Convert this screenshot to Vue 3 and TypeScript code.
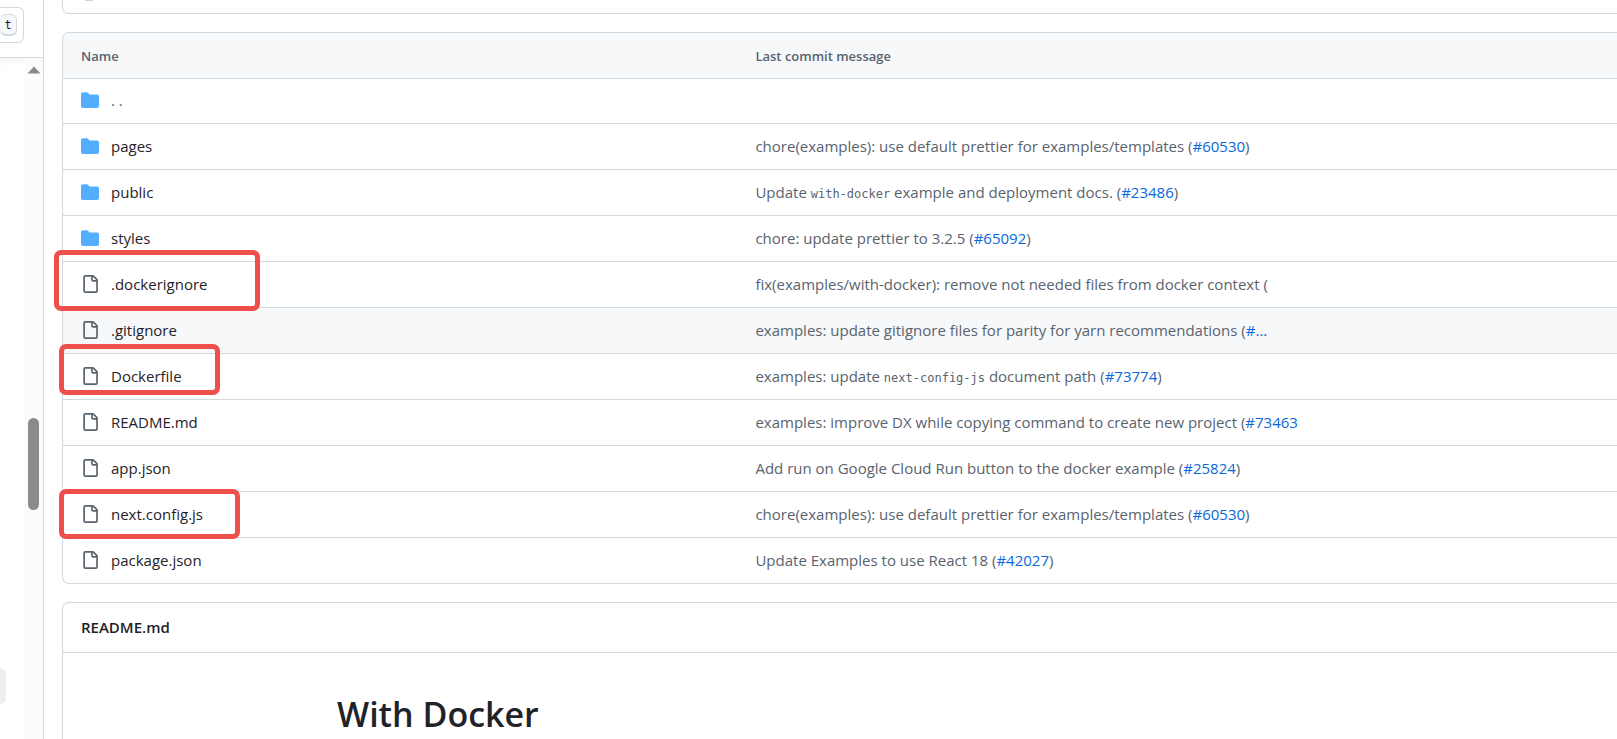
<script setup lang="ts">
interface Entry {
  name: string
  kind: 'folder' | 'file'
  before?: string
  code?: string
  after?: string
  link?: string
  tail?: string
  active?: boolean
  mark?: 'wide' | 'short' | 'medium'
}

const entries: Entry[] = [
  { name: 'pages', kind: 'folder', before: 'chore(examples): use default prettier for examples/templates (', link: '#60530', tail: ')' },
  { name: 'public', kind: 'folder', before: 'Update ', code: 'with-docker', after: ' example and deployment docs. (', link: '#23486', tail: ')' },
  { name: 'styles', kind: 'folder', before: 'chore: update prettier to 3.2.5 (', link: '#65092', tail: ')' },
  { name: '.dockerignore', kind: 'file', before: 'fix(examples/with-docker): remove not needed files from docker context (', mark: 'wide' },
  { name: '.gitignore', kind: 'file', before: 'examples: update gitignore files for parity for yarn recommendations (', link: '#...', active: true },
  { name: 'Dockerfile', kind: 'file', before: 'examples: update ', code: 'next-config-js', after: ' document path (', link: '#73774', tail: ')', mark: 'short' },
  { name: 'README.md', kind: 'file', before: 'examples: improve DX while copying command to create new project (', link: '#73463' },
  { name: 'app.json', kind: 'file', before: 'Add run on Google Cloud Run button to the docker example (', link: '#25824', tail: ')' },
  { name: 'next.config.js', kind: 'file', before: 'chore(examples): use default prettier for examples/templates (', link: '#60530', tail: ')', mark: 'medium' },
  { name: 'package.json', kind: 'file', before: 'Update Examples to use React 18 (', link: '#42027', tail: ')' },
]

const folderPath =
  'M1.75 1A1.75 1.75 0 0 0 0 2.75v10.5C0 14.216.784 15 1.75 15h12.5A1.75 1.75 0 0 0 16 13.25v-8.5A1.75 1.75 0 0 0 14.25 3H7.5a.25.25 0 0 1-.2-.1l-.9-1.2C6.07 1.26 5.55 1 5 1H1.75Z'
const filePath =
  'M2 1.75C2 .784 2.784 0 3.75 0h6.586c.464 0 .909.184 1.237.513l2.914 2.914c.329.328.513.773.513 1.237v9.586A1.75 1.75 0 0 1 13.25 16h-9.5A1.75 1.75 0 0 1 2 14.25Zm1.75-.25a.25.25 0 0 0-.25.25v12.5c0 .138.112.25.25.25h9.5a.25.25 0 0 0 .25-.25V6h-2.75A1.75 1.75 0 0 1 9 4.25V1.5Zm6.75.062V4.25c0 .138.112.25.25.25h2.688l-.011-.013-2.914-2.914-.013-.011Z'
</script>

<template>
  <div class="page">
    <aside class="sidebar">
      <div class="search">
        <div class="search-box"><kbd>t</kbd></div>
      </div>
      <div class="tree">
        <div class="tree-items"><div class="tree-item"></div></div>
        <div class="track">
          <svg class="arrow" viewBox="0 0 14 8" aria-hidden="true"><path d="M7 0.5 13.5 7.5H0.5Z" /></svg>
          <div class="thumb"></div>
        </div>
      </div>
    </aside>

    <main class="main">
      <section class="box commit"><span class="avatar"></span></section>

      <section class="box">
        <table>
          <thead>
            <tr>
              <th class="col-name" scope="col">Name</th>
              <th scope="col">Last commit message</th>
            </tr>
          </thead>
          <tbody>
            <tr class="parent">
              <td>
                <div class="entry">
                  <svg class="icon folder" viewBox="0 0 16 16" aria-hidden="true"><path :d="folderPath" /></svg>
                  <a class="up" href="#">. .</a>
                </div>
              </td>
              <td></td>
            </tr>
            <tr v-for="e in entries" :key="e.name" :class="{ active: e.active }">
              <td>
                <div class="entry">
                  <svg class="icon" :class="e.kind" viewBox="0 0 16 16" aria-hidden="true">
                    <path :d="e.kind === 'folder' ? folderPath : filePath" />
                  </svg>
                  <a class="name" href="#">{{ e.name }}</a>
                  <span v-if="e.mark" class="mark" :class="e.mark"></span>
                </div>
              </td>
              <td class="message">{{ e.before }}<code v-if="e.code">{{ e.code }}</code>{{ e.after }}<a v-if="e.link" href="#">{{ e.link }}</a>{{ e.tail }}</td>
            </tr>
          </tbody>
        </table>
      </section>

      <section class="box readme">
        <h2>README.md</h2>
        <article><h1>With Docker</h1></article>
      </section>
    </main>
  </div>
</template>

<style>
body {
  margin: 0;
  background: #fff;
}
</style>

<style scoped>
* {
  box-sizing: border-box;
}
.page {
  display: flex;
  height: 100vh;
  overflow: hidden;
  font-family: 'Segoe UI', 'Open Sans', 'Noto Sans', sans-serif;
  font-size: 15px;
  line-height: 24px;
  color: #1f2328;
}
a {
  color: inherit;
  text-decoration: none;
}
.sidebar {
  flex: none;
  width: 44px;
  display: flex;
  flex-direction: column;
  border-right: 1px solid #d1d9e0;
}
.search {
  height: 58px;
  padding: 7px 19px 0 0;
  border-bottom: 1px solid #d1d9e0;
}
.search-box {
  height: 36px;
  display: flex;
  align-items: center;
  border: 1px solid #d1d9e0;
  border-left: 0;
  border-radius: 0 6px 6px 0;
}
kbd {
  width: 17px;
  height: 22px;
  text-align: center;
  font: 12px/20px 'DejaVu Sans Mono', monospace;
  background: #f6f8fa;
  border: 1px solid #d1d9e0;
  border-left: 0;
  border-bottom-width: 2px;
  border-radius: 6px;
}
.tree {
  flex: 1;
  display: flex;
  box-shadow: inset 0 6px 8px -4px #f0f1f3;
}
.tree-items {
  flex: 1;
  padding-top: 610px;
}
.tree-item {
  width: 6px;
  height: 36px;
  background: #eceef0;
  border-radius: 0 6px 6px 0;
}
.track {
  width: 19px;
  display: flex;
  flex-direction: column;
  align-items: center;
  padding-top: 8px;
  background: #fcfcfc;
}
.arrow {
  width: 14px;
  height: 8px;
  fill: #8b8b8b;
}
.thumb {
  width: 11px;
  height: 92px;
  margin-top: 344px;
  background: #8b8b8b;
  border-radius: 6px;
}
.main {
  flex: 1;
  min-width: 0;
  display: flex;
  flex-direction: column;
  gap: 18px;
  padding-left: 18px;
}
.box {
  flex: none;
  border: 1px solid #d1d9e0;
  border-right: 0;
  border-radius: 7px 0 0 7px;
}
.commit {
  height: 14px;
  border-top: 0;
  border-radius: 0 0 0 7px;
  padding-left: 22px;
}
.avatar {
  display: block;
  width: 8px;
  height: 1px;
  background: #d0d2d5;
}
table {
  width: 100%;
  table-layout: fixed;
  border-collapse: separate;
  border-spacing: 0;
}
th {
  height: 45px;
  padding: 0 18px;
  text-align: left;
  font-size: 13px;
  font-weight: 600;
  color: #59636e;
  background: #f6f8fa;
}
.col-name {
  width: 43.4%;
  border-top-left-radius: 6px;
}
td {
  height: 46px;
  padding: 0 18px 2px;
  border-top: 1px solid #d1d9e0;
}
.parent td {
  height: 45px;
}
.active td {
  background: #f6f8fa;
}
.entry {
  position: relative;
  display: flex;
  align-items: center;
  gap: 12px;
}
.icon {
  width: 18px;
  height: 18px;
}
.folder {
  fill: #54aeff;
}
.file {
  fill: #59636e;
}
.up {
  color: #59636e;
}
.message {
  color: #59636e;
  white-space: nowrap;
}
.message a {
  color: #0969da;
}
code {
  font-family: 'DejaVu Sans Mono', monospace;
  font-size: 12px;
  line-height: 12px;
}
.mark {
  position: absolute;
  border: 5px solid #ee4f4a;
  border-radius: 7px;
}
.wide {
  left: -27px;
  top: -22px;
  width: 206px;
  height: 61px;
}
.short {
  left: -22px;
  top: -20px;
  width: 161px;
  height: 51px;
}
.medium {
  left: -22px;
  top: -13px;
  width: 181px;
  height: 50px;
}
.readme {
  height: 200px;
}
h2 {
  margin: 0;
  padding: 12px 18px 13px;
  font-size: 15px;
  font-weight: 600;
  border-bottom: 1px solid #d1d9e0;
}
article {
  width: 100%;
  max-width: 1006px;
  margin: 0 auto;
  padding-top: 37px;
}
h1 {
  margin: 0;
  font-size: 34px;
  line-height: 48px;
  font-weight: 600;
}
</style>
